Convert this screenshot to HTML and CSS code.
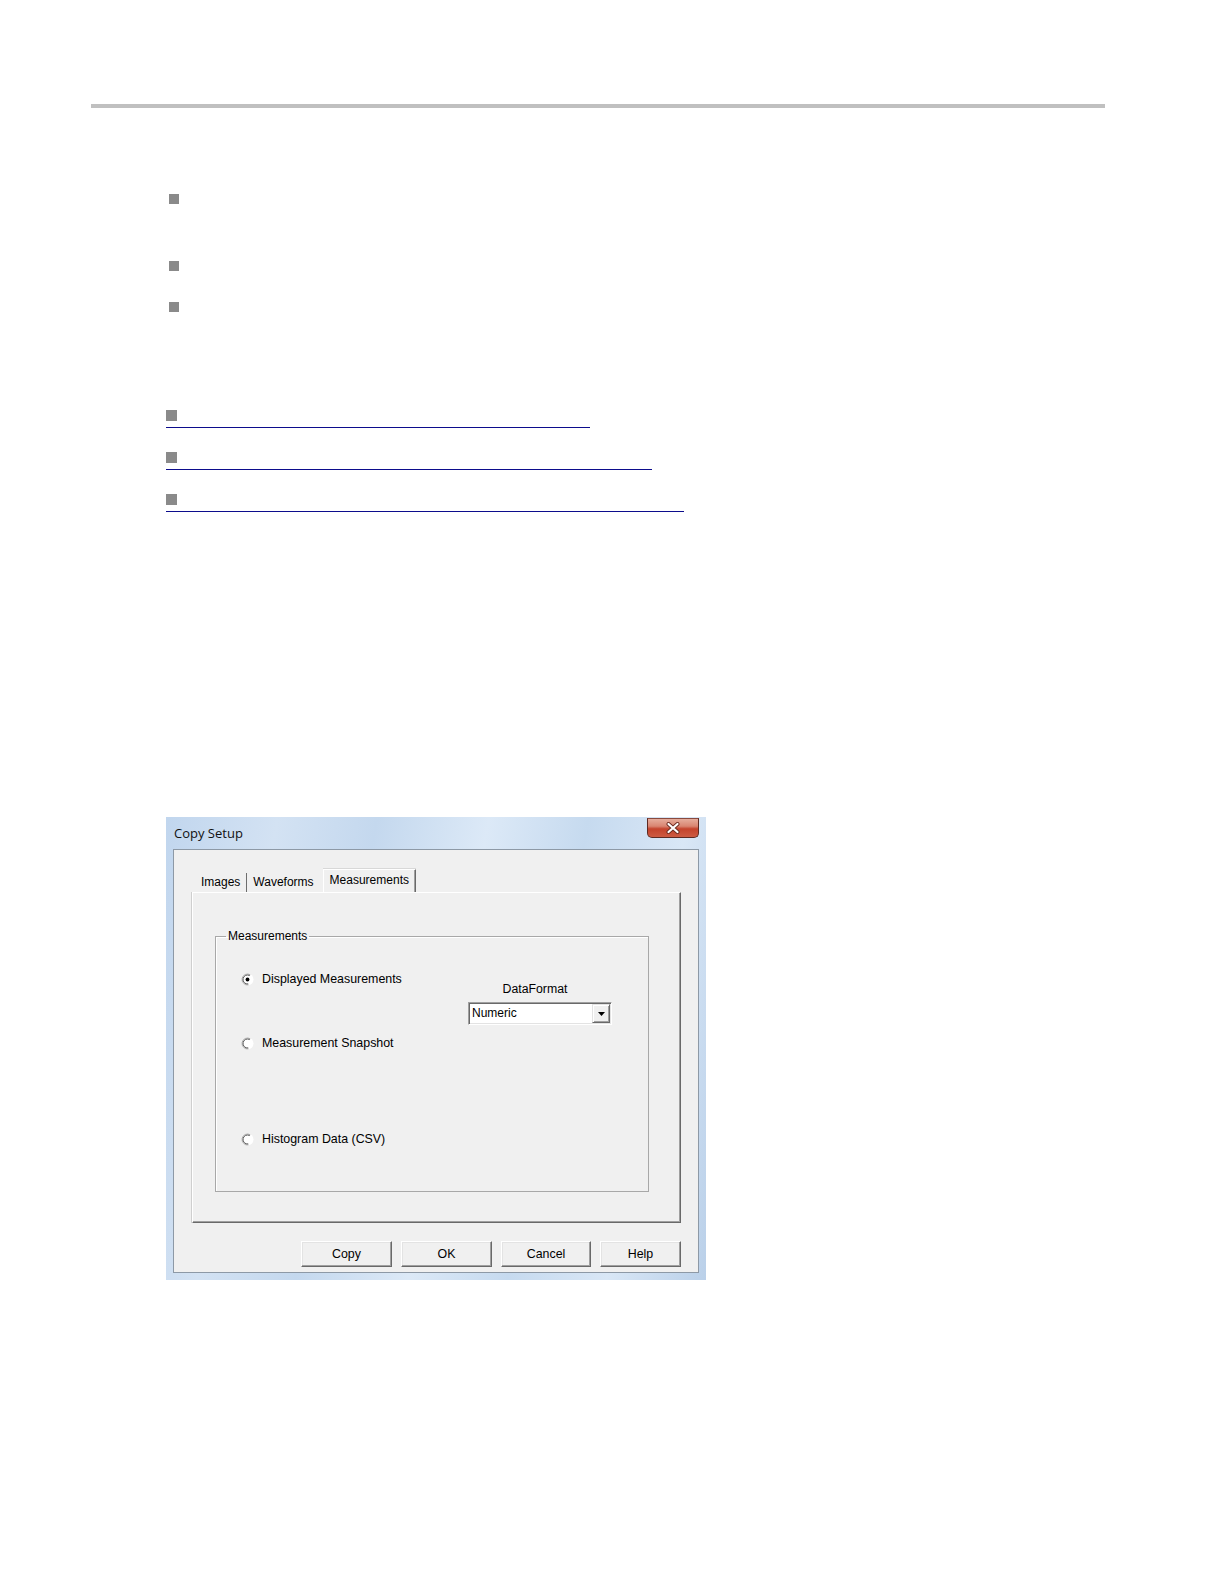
FILE: index.html
```html
<!DOCTYPE html>
<html lang="en">
<head>
<meta charset="utf-8">
<title>Copy Setup – Measurements</title>
<link rel="stylesheet" href="styles.css">
</head>
<body>
<main class="page">
  <hr class="rule">
  <ul class="bullets">
    <li class="bullet bullet-1"></li>
    <li class="bullet bullet-2"></li>
    <li class="bullet bullet-3"></li>
  </ul>
  <ul class="links">
    <li><a class="link link-1" href="#"><span class="square"></span></a></li>
    <li><a class="link link-2" href="#"><span class="square"></span></a></li>
    <li><a class="link link-3" href="#"><span class="square"></span></a></li>
  </ul>
  <figure class="dialog">
    <div class="titlebar">
      <span class="title">Copy Setup</span>
      <button class="close" type="button" aria-label="Close">
        <svg viewBox="0 0 14 12" width="14" height="12" aria-hidden="true">
          <path d="M2.5 2 L11.5 10 M11.5 2 L2.5 10" stroke="#6b2b20" stroke-width="4" stroke-linecap="round" fill="none"/>
          <path d="M2.5 2 L11.5 10 M11.5 2 L2.5 10" stroke="#ffffff" stroke-width="2.2" stroke-linecap="round" fill="none"/>
        </svg>
      </button>
    </div>
    <div class="client">
      <div class="tabs">
        <span class="tab tab-sep">Images</span>
        <span class="tab">Waveforms</span>
        <span class="tab active">Measurements</span>
      </div>
      <div class="panel">
        <fieldset class="group">
          <legend>Measurements</legend>
          <div class="group-body">
            <div class="options">
              <label class="option">
                <svg class="radio" viewBox="0 0 13 13" width="13" height="13" aria-hidden="true">
                  <circle cx="6.5" cy="6.5" r="6" fill="#ffffff"/>
                  <path d="M7.45 11.92 A5.5 5.5 0 1 1 9.25 1.74" fill="none" stroke="#a8a8a8" stroke-width="1"/>
                  <path d="M7.28 10.93 A4.5 4.5 0 1 1 8.75 2.6" fill="none" stroke="#5a5a5a" stroke-width="1"/>
                  <circle cx="6.5" cy="6.5" r="1.9" fill="#000000"/>
                </svg>
                <span>Displayed Measurements</span>
              </label>
              <label class="option option-2">
                <svg class="radio" viewBox="0 0 13 13" width="13" height="13" aria-hidden="true">
                  <circle cx="6.5" cy="6.5" r="6" fill="#ffffff"/>
                  <path d="M7.45 11.92 A5.5 5.5 0 1 1 9.25 1.74" fill="none" stroke="#a8a8a8" stroke-width="1"/>
                  <path d="M7.28 10.93 A4.5 4.5 0 1 1 8.75 2.6" fill="none" stroke="#5a5a5a" stroke-width="1"/>
                </svg>
                <span>Measurement Snapshot</span>
              </label>
              <label class="option option-3">
                <svg class="radio" viewBox="0 0 13 13" width="13" height="13" aria-hidden="true">
                  <circle cx="6.5" cy="6.5" r="6" fill="#ffffff"/>
                  <path d="M7.45 11.92 A5.5 5.5 0 1 1 9.25 1.74" fill="none" stroke="#a8a8a8" stroke-width="1"/>
                  <path d="M7.28 10.93 A4.5 4.5 0 1 1 8.75 2.6" fill="none" stroke="#5a5a5a" stroke-width="1"/>
                </svg>
                <span>Histogram Data (CSV)</span>
              </label>
            </div>
            <div class="format">
              <div class="format-label">DataFormat</div>
              <div class="select">
                <span class="select-value">Numeric</span>
                <span class="select-btn">
                  <svg viewBox="0 0 7 4" width="7" height="4" aria-hidden="true"><path d="M0 0 H7 L3.5 4 Z" fill="#000000"/></svg>
                </span>
              </div>
            </div>
          </div>
        </fieldset>
      </div>
      <div class="buttons">
        <button class="btn" type="button">Copy</button>
        <button class="btn" type="button">OK</button>
        <button class="btn btn-cancel" type="button">Cancel</button>
        <button class="btn btn-help" type="button">Help</button>
      </div>
    </div>
  </figure>
</main>
</body>
</html>
```

FILE: styles.css
```css
* {
  box-sizing: border-box;
}

html,
body {
  margin: 0;
  background: #ffffff;
}

body {
  font-family: "Liberation Sans", Arial, sans-serif;
  color: #000000;
}

.page {
  width: 1224px;
  padding-top: 104px;
}

/* Header rule */
.rule {
  margin: 0 0 0 91px;
  width: 1014px;
  height: 4px;
  border: 0;
  background: #c0c0c0;
}

/* Bullet list */
.bullets {
  list-style: none;
  margin: 0;
  padding: 0 0 0 169px;
}

.bullet {
  width: 10px;
  height: 10px;
  background: #8a8a8a;
}

.bullet-1 {
  margin-top: 86px;
}

.bullet-2 {
  margin-top: 57px;
}

.bullet-3 {
  margin-top: 31px;
}

/* Link list */
.links {
  list-style: none;
  margin: 98px 0 0;
  padding: 0 0 0 166px;
}

.links li + li {
  margin-top: 24px;
}

.link {
  display: block;
  height: 18px;
  border-bottom: 1px solid #0c0c8c;
}

.link-1 {
  width: 424px;
}

.link-2 {
  width: 486px;
}

.link-3 {
  width: 518px;
}

.square {
  display: block;
  width: 11px;
  height: 11px;
  background: #8a8a8a;
}

/* Dialog */
.dialog {
  margin: 305px 0 0 166px;
  width: 540px;
  padding: 0 7px 7px;
  background: linear-gradient(100deg, #c1d6ee 0%, #d3e2f3 18%, #c4d8ee 34%, #dce9f7 52%, #c6daef 68%, #d9e7f6 84%, #bad0e9 100%);
  font-family: "Liberation Sans", Arial, sans-serif;
  font-size: 12px;
  color: #000000;
}

.titlebar {
  display: flex;
  justify-content: space-between;
  align-items: flex-start;
  height: 32px;
}

.title {
  align-self: center;
  padding-left: 1px;
  font-family: "Open Sans", "Liberation Sans", sans-serif;
  font-size: 13px;
  line-height: 18px;
  color: #111111;
}

.close {
  display: flex;
  align-items: center;
  justify-content: center;
  margin-top: 1px;
  width: 52px;
  height: 20px;
  padding: 0;
  border: 1px solid #5e2a22;
  border-top-color: #8a4a3e;
  border-radius: 0 0 5px 5px;
  background: linear-gradient(#e6ad9c 0%, #d98571 40%, #c4432c 55%, #cd5b43 100%);
}

.client {
  height: 424px;
  padding: 19px 17px 5px 18px;
  background: #f0f0f0;
  border: 1px solid #8d99a6;
}

/* Tabs */
.tabs {
  display: flex;
  align-items: flex-end;
  height: 23px;
  padding-left: 3px;
}

.tab {
  height: 19px;
  line-height: 18px;
  padding: 0 6px;
  white-space: nowrap;
}

.tab-sep {
  border-right: 1px solid #6d6d6d;
}

.tab.active {
  position: relative;
  height: 23px;
  line-height: 20px;
  margin-left: 3px;
  border-top: 1px solid #ffffff;
  border-left: 1px solid #ffffff;
  border-right: 1px solid #696969;
  box-shadow: inset -1px 0 0 #a0a0a0, 0 -1px 0 #d8d8d8;
}

/* Tab panel */
.panel {
  height: 331px;
  border: 1px solid;
  border-color: #ffffff #696969 #696969 #ffffff;
  box-shadow: inset -1px -1px 0 #a0a0a0, -1px 0 0 #cfcfcf;
}

.group {
  margin: 36px 0 0 22px;
  padding: 0;
  width: 434px;
  min-width: 0;
  border: 1px solid #a8a8a8;
  box-shadow: inset 1px 1px 0 #ffffff;
}

.group legend {
  margin-left: 10px;
  padding: 0 2px;
  font-size: 12px;
  line-height: 14px;
}

.group-body {
  display: flex;
  padding: 28px 0 44px;
}

.options {
  display: flex;
  flex-direction: column;
  width: 252px;
  padding-left: 25px;
}

.option {
  display: flex;
  align-items: center;
  gap: 8px;
  height: 16px;
  font-size: 12.4px;
  white-space: nowrap;
}

.option-2 {
  margin-top: 48px;
}

.option-3 {
  margin-top: 80px;
}

.radio {
  flex: none;
}

.format {
  width: 144px;
  padding-top: 10px;
}

.format-label {
  line-height: 16px;
  padding-right: 10px;
  text-align: center;
  font-size: 12.3px;
}

.select {
  display: flex;
  margin-top: 5px;
  height: 23px;
  background: #ffffff;
  border: 1px solid;
  border-color: #a0a0a0 #ffffff #ffffff #a0a0a0;
  box-shadow: inset 1px 1px 0 #696969, inset -1px -1px 0 #e3e3e3;
}

.select-value {
  padding-left: 3px;
  line-height: 21px;
  font-size: 12px;
}

.select-btn {
  display: flex;
  align-items: center;
  justify-content: center;
  margin: 1px 1px 1px auto;
  width: 18px;
  height: 19px;
  background: #f0f0f0;
  border: 1px solid;
  border-color: #e3e3e3 #696969 #696969 #e3e3e3;
  box-shadow: inset 1px 1px 0 #ffffff, inset -1px -1px 0 #a0a0a0;
}

/* Buttons */
.buttons {
  display: flex;
  justify-content: flex-end;
  gap: 9px;
  margin-top: 18px;
}

.btn {
  width: 91px;
  height: 26px;
  padding: 0;
  font-family: "Liberation Sans", Arial, sans-serif;
  font-size: 12.4px;
  color: #000000;
  background: #f0f0f0;
  border: 1px solid;
  border-color: #ffffff #696969 #696969 #ffffff;
  box-shadow: inset -1px -1px 0 #a0a0a0, inset 1px 1px 0 #e3e3e3;
}

.btn-cancel {
  width: 90px;
}

.btn-help {
  width: 81px;
}
```
